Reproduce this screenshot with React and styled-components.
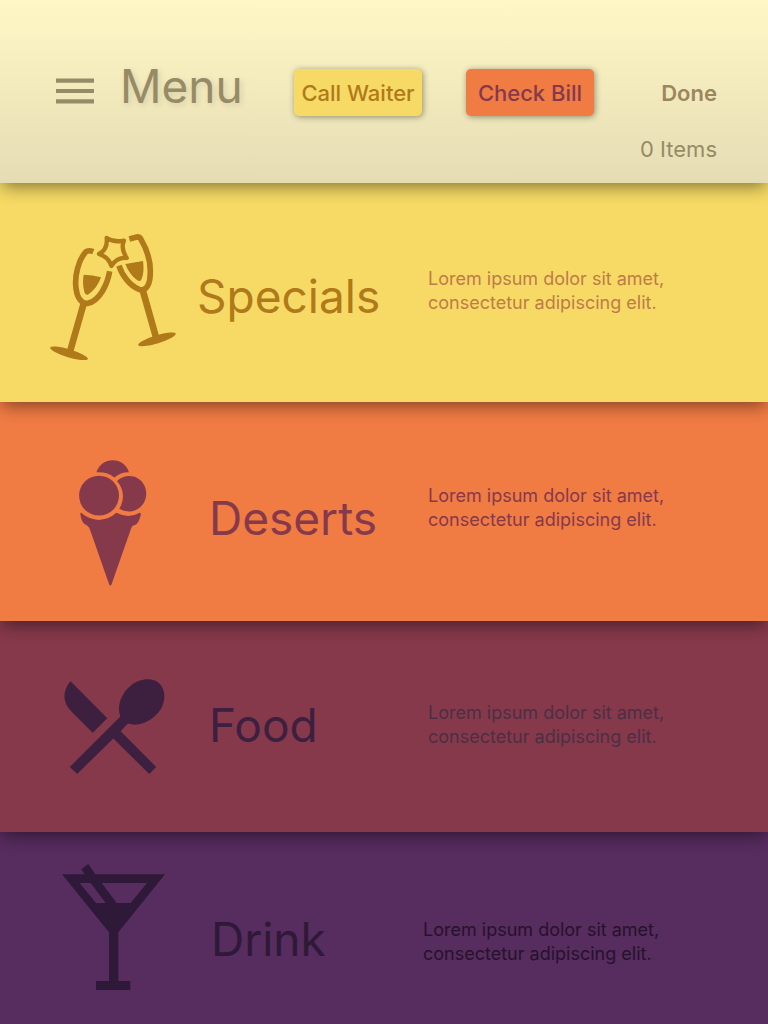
import React from "react";
import styled, { createGlobalStyle } from "styled-components";

const fontStack = 'Inter, Roboto, "Liberation Sans", sans-serif';

const GlobalStyle = createGlobalStyle`
  *, *::before, *::after { box-sizing: border-box; }
  body {
    margin: 0;
    background: #572c5f;
    font-family: ${fontStack};
  }
  #root { min-height: 100vh; display: flex; flex-direction: column; }
`;

const Page = styled.div`
  flex: 1;
  display: flex;
  flex-direction: column;
`;

const Header = styled.header`
  position: relative;
  z-index: 5;
  display: grid;
  grid-template-columns: 194px 128px 128px 1fr;
  column-gap: 44px;
  align-items: start;
  min-height: 183px;
  padding: 56px 51px 20px 56px;
  background: linear-gradient(#fff8c5, #e5dcb4);
  box-shadow: 0 6px 16px -2px rgba(0, 0, 0, 0.45);
  color: #968b66;
`;

const Brand = styled.div`
  display: flex;
  align-items: center;
  gap: 26px;
`;

const IconButton = styled.button`
  display: flex;
  padding: 10px 0 0;
  border: 0;
  background: none;
  color: inherit;
  cursor: pointer;
`;

const PageTitle = styled.h1`
  margin: 0;
  font-size: 46px;
  line-height: 60px;
  font-weight: 400;
  text-shadow: 2px 2px 6px rgba(0, 0, 0, 0.12);
`;

const ActionButton = styled.button`
  height: 47px;
  margin-top: 13px;
  padding: 0;
  border: 0;
  border-radius: 5px;
  background: ${(p) => p.$background};
  color: ${(p) => p.$color};
  box-shadow: 1px 1px 6px rgba(0, 0, 0, 0.4);
  font: 500 22px/28px ${fontStack};
  white-space: nowrap;
  cursor: pointer;
`;

const Order = styled.div`
  display: flex;
  flex-direction: column;
  align-items: flex-end;
  gap: 28px;
  padding-top: 23px;
  font-size: 22px;
  line-height: 28px;
  white-space: nowrap;
`;

const DoneButton = styled.button`
  padding: 0;
  border: 0;
  background: none;
  color: #9b8660;
  font: 600 22px/28px ${fontStack};
  cursor: pointer;
`;

const Main = styled.main`
  flex: 1;
  display: flex;
  flex-direction: column;
`;

const Course = styled.section`
  position: relative;
  z-index: ${(p) => p.$layer};
  display: grid;
  grid-template-columns: ${(p) => p.$columns};
  align-items: start;
  min-height: ${(p) => p.$height}px;
  padding: 0 50px;
  background: ${(p) => p.$background};
  color: ${(p) => p.$color};
  box-shadow: 0 6px 16px -2px rgba(0, 0, 0, 0.45);

  &:last-child { flex: 1; }
`;

const CourseIcon = styled.div`
  display: flex;
  padding-top: ${(p) => p.$top}px;
  padding-left: ${(p) => p.$left}px;
`;

const CourseName = styled.h2`
  margin: 0;
  padding-top: ${(p) => p.$top}px;
  font-size: 46px;
  line-height: 60px;
  font-weight: 400;
`;

const CourseText = styled.p`
  max-width: 250px;
  margin: 0;
  padding-top: ${(p) => p.$top}px;
  color: ${(p) => p.$color};
  font-size: 18px;
  line-height: 24px;
`;

const MenuIcon = () => (
  <svg width="38" height="26" viewBox="0 0 38 26" fill="currentColor" aria-hidden="true">
    <path d="M0 .4h38v4.4H0zM0 10.9h38v4.2H0zM0 21.2h38v4.4H0z" />
  </svg>
);

const Specials = () => (
  <svg width="126" height="126" viewBox="30 27 378 378" fill="none" stroke="currentColor" aria-hidden="true">
    <path strokeWidth="17" d="M160 80Q145 74 137 81C116 105 103 150 108 190C112 221 126 237 144 235C178 227 202 180 209 139" />
    <path strokeWidth="17" d="M268 42L290 36Q299 35 303 43C325 80 335 125 329 165C324 190 311 198 297 193C270 182 246 152 237 122" />
    <path strokeWidth="20" d="M131 236L90 380M308 195L349 340" />
    <path fill="currentColor" stroke="none" d="M131 149Q158 149 183 157Q172 190 144 209Q137 211 134 203C128 185 128 167 131 149zM256 117L309 108C312 130 311 151 303 166Q299 170 292 166Q268 149 256 117z" />
    <ellipse cx="87" cy="385" rx="59" ry="12" transform="rotate(17 87 385)" fill="currentColor" stroke="none" />
    <ellipse cx="351" cy="343" rx="59" ry="12" transform="rotate(-17 351 343)" fill="currentColor" stroke="none" />
    <path strokeWidth="13" strokeLinejoin="round" d="M200 39Q221 53 252 47Q241 70 260 99Q231 96 214 123Q206 96 177 87Q204 73 200 39z" />
  </svg>
);

const Deserts = () => (
  <svg width="68" height="126" viewBox="58 29 204 379" fill="currentColor" aria-hidden="true">
    <path d="M110 66C119 42 137 30 159 30C182 30 201 44 208 66Q184 65 164 82Q144 64 110 66z" />
    <circle cx="118" cy="136" r="60" />
    <path d="M172 92C199 67 239 75 254 105C270 138 252 176 217 183Q196 186 179 176C196 145 193 116 172 92z" />
    <path d="M64 188Q91 211 122 209Q149 207 170 188Q206 207 241 188Q246 189 241 203C237 218 231 225 220 226Q215 230 212 242L156 402Q152 412 148 402L92 242Q89 230 82 226Q66 222 62 194Q61 187 64 188z" />
  </svg>
);

const Food = () => (
  <svg width="101" height="95" viewBox="42 39 303 286" fill="currentColor" aria-hidden="true">
    <path d="M61 46L172 157L128 201L63 136C36 109 37 74 61 46z" />
    <path d="M59 304L211 152C199 120 215 80 244 58C268 38 308 33 328 52C353 75 347 124 316 150C292 173 260 182 234 173L212 196L319 304L298 325L190 218L81 325z" />
  </svg>
);

const Drink = () => (
  <svg width="103" height="126" viewBox="35 27 309 378" fill="currentColor" fillRule="evenodd" aria-hidden="true">
    <path d="M35 58H103L93 43L114 27L135 58H344L204 232V378H240V405H137V378H176V232zM88 84L137 144H166L121 84zM154 84L199 144H241L290 84z" />
  </svg>
);

const text = "Lorem ipsum dolor sit amet, consectetur adipiscing elit.";

const courses = [
  {
    name: "Specials", Icon: Specials, height: 219, background: "#f6da65", color: "#b0791a", textColor: "#bf7b48",
    columns: "147px 231px 1fr", iconLeft: 0, iconTop: 51, nameTop: 83, textTop: 84,
  },
  {
    name: "Deserts", Icon: Deserts, height: 219, background: "#f07b43", color: "#86394b", textColor: "#86394b",
    columns: "159px 219px 1fr", iconLeft: 29, iconTop: 58, nameTop: 86, textTop: 82,
  },
  {
    name: "Food", Icon: Food, height: 211, background: "#86394b", color: "#3d2040", textColor: "#4b2f45",
    columns: "159px 219px 1fr", iconLeft: 14, iconTop: 58, nameTop: 74, textTop: 80,
  },
  {
    name: "Drink", Icon: Drink, height: 192, background: "#572c5f", color: "#2e1938", textColor: "#26122b",
    columns: "161px 212px 1fr", iconLeft: 12, iconTop: 32, nameTop: 77, textTop: 86,
  },
];

export default function App() {
  return (
    <>
      <GlobalStyle />
      <Page>
        <Header>
          <Brand>
            <IconButton type="button" aria-label="Open navigation"><MenuIcon /></IconButton>
            <PageTitle>Menu</PageTitle>
          </Brand>
          <ActionButton type="button" $background="#f6da65" $color="#b0791a">Call Waiter</ActionButton>
          <ActionButton type="button" $background="#f07b43" $color="#86394b">Check Bill</ActionButton>
          <Order>
            <DoneButton type="button">Done</DoneButton>
            <span>0 Items</span>
          </Order>
        </Header>
        <Main>
          {courses.map(({ Icon, ...c }, i) => (
            <Course key={c.name} $layer={4 - i} $columns={c.columns} $height={c.height} $background={c.background} $color={c.color}>
              <CourseIcon $top={c.iconTop} $left={c.iconLeft}><Icon /></CourseIcon>
              <CourseName $top={c.nameTop}>{c.name}</CourseName>
              <CourseText $top={c.textTop} $color={c.textColor}>{text}</CourseText>
            </Course>
          ))}
        </Main>
      </Page>
    </>
  );
}
